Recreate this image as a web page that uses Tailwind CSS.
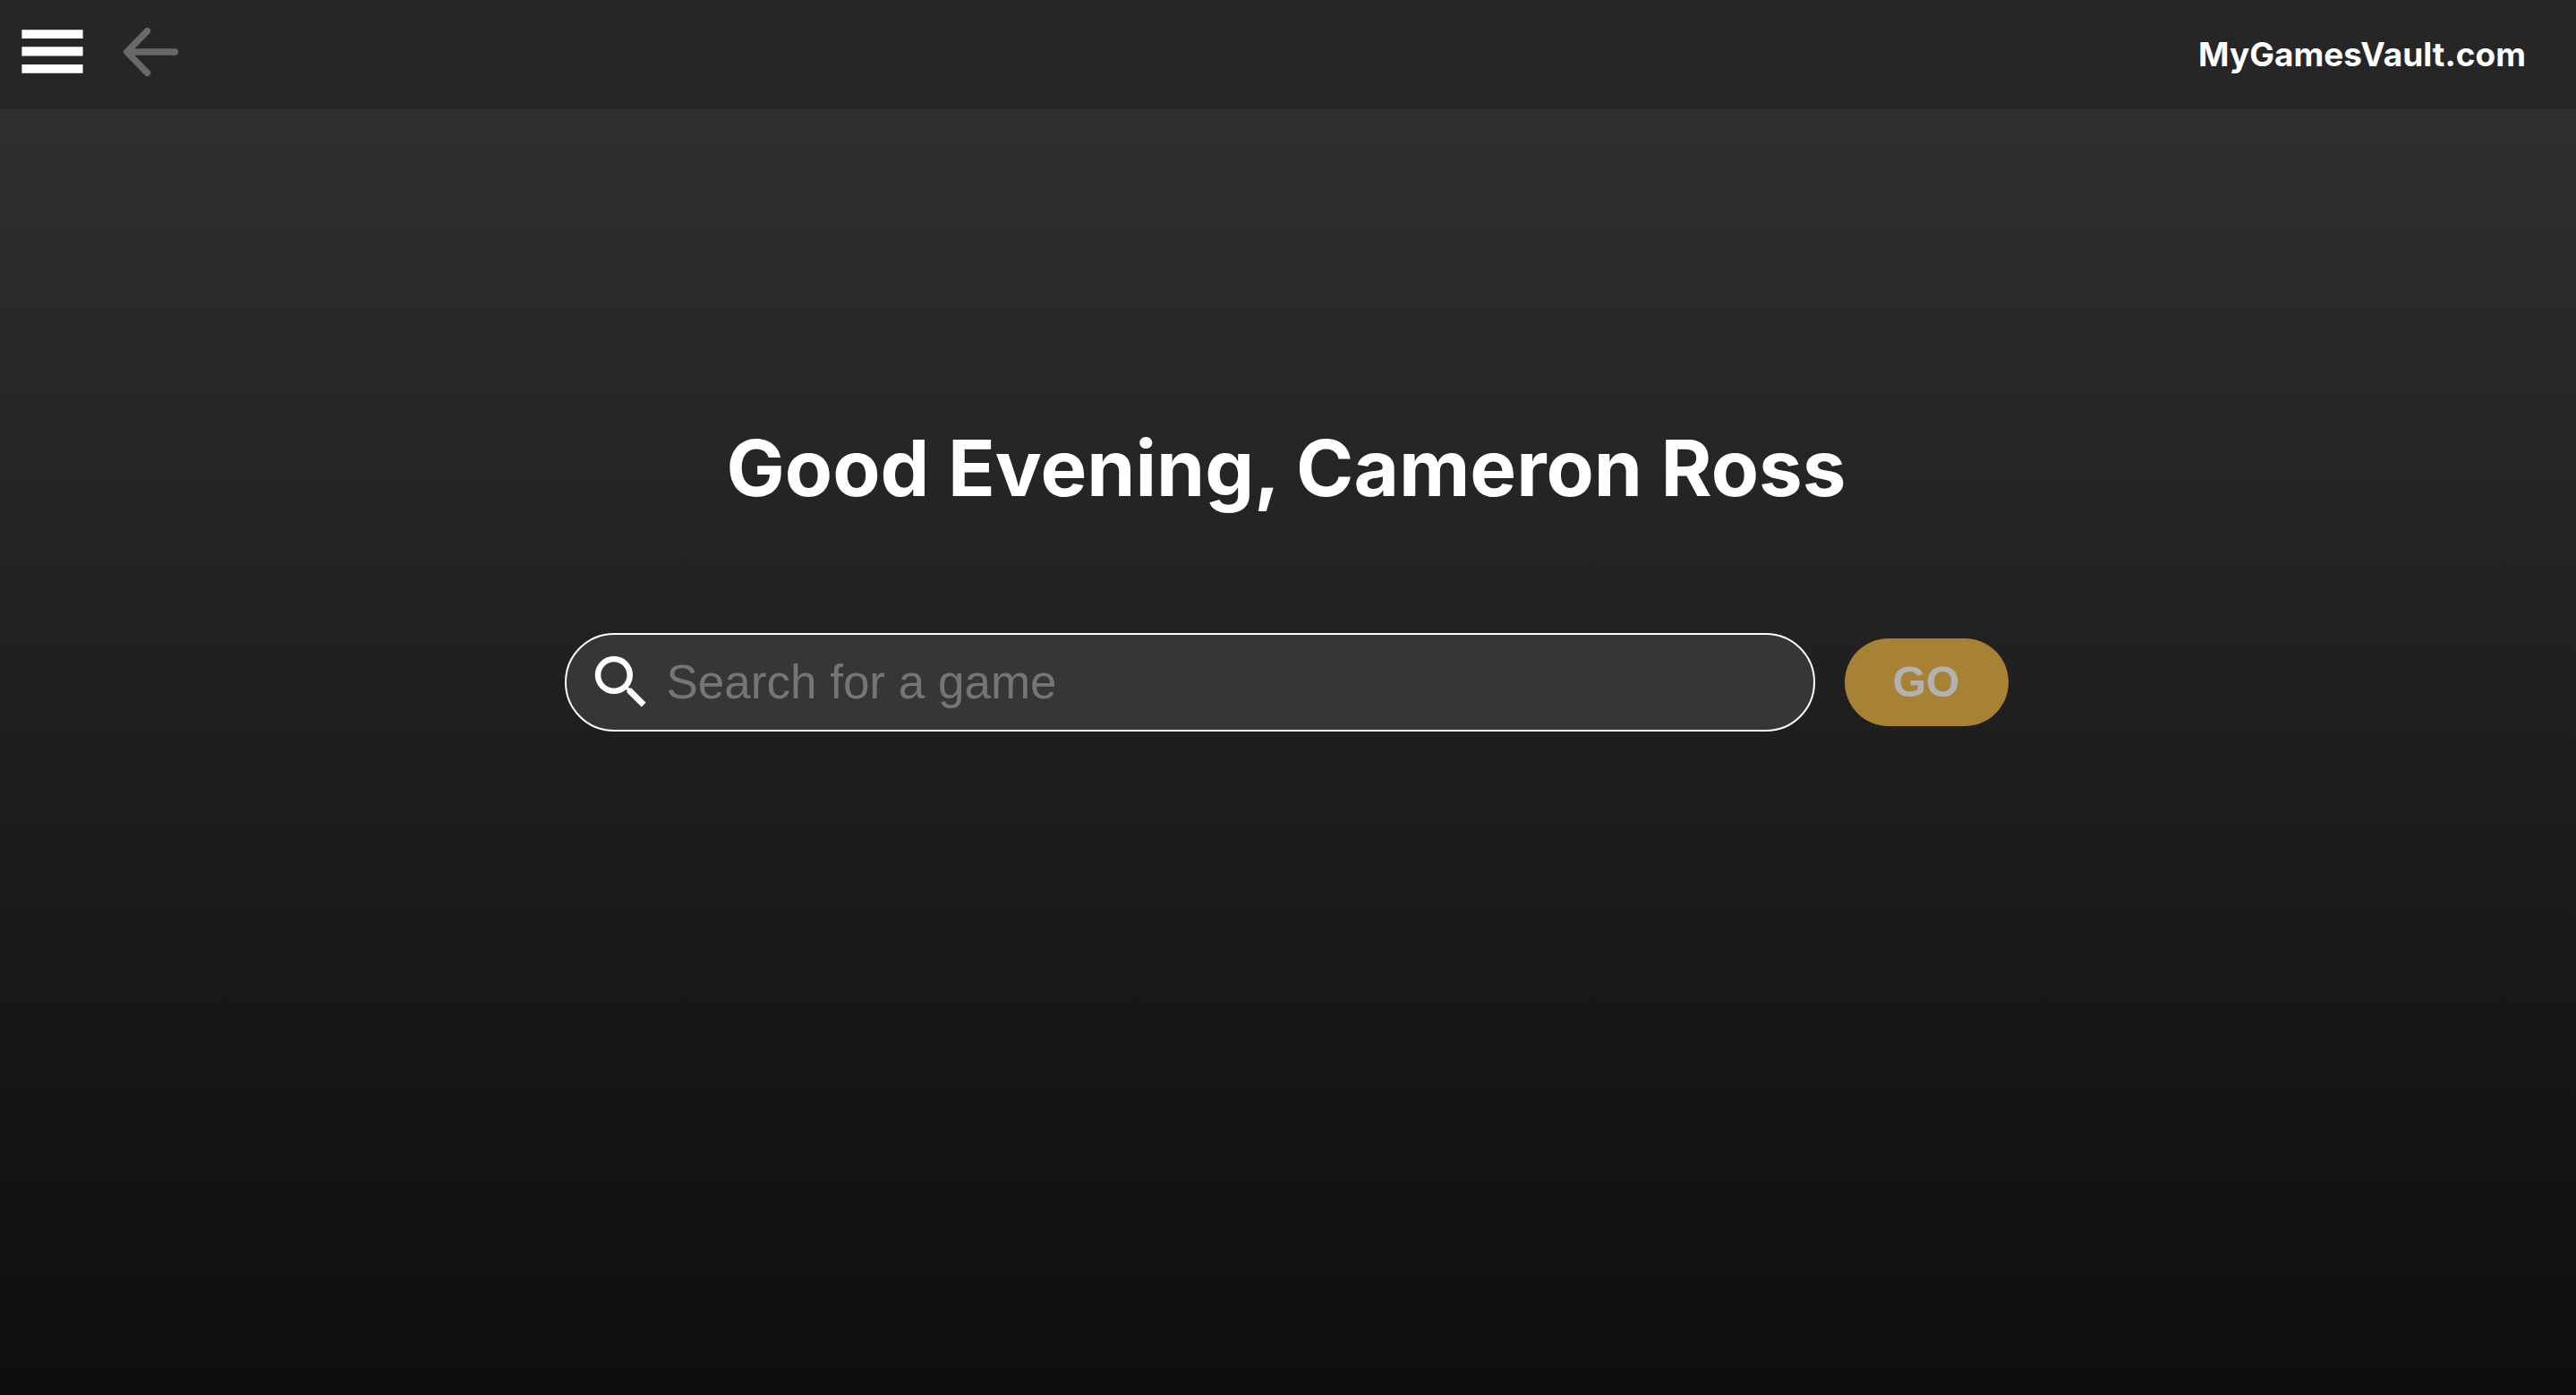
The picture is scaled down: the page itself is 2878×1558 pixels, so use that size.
<!DOCTYPE html>
<html lang="en">
<head>
<meta charset="utf-8">
<meta name="viewport" content="width=device-width, initial-scale=1">
<title>MyGamesVault.com</title>
<script src="https://cdn.jsdelivr.net/npm/@tailwindcss/browser@4"></script>
</head>
<body class="flex min-h-screen flex-col bg-linear-to-b from-[#323232] to-[#0e0e0e] font-['Inter',sans-serif] text-white">
  <header class="flex h-[122px] items-center justify-between bg-[#262626] pr-14 pl-6">
    <nav class="flex items-center gap-11 pb-1.5" aria-label="Main">
      <button type="button" aria-label="Menu">
        <svg class="block h-[50px] w-[69px]" viewBox="0 0 69 50" fill="currentColor" aria-hidden="true">
          <path d="M.4.2h68.2V10H.4zM.4 19.2h68.2v10.3H.4zM.4 39h68.2v9.7H.4z"/>
        </svg>
      </button>
      <button type="button" aria-label="Back" class="text-[#696969]">
        <svg class="block h-14 w-[64px]" viewBox="0 0 64 56" fill="none" stroke="currentColor" stroke-width="7.4" stroke-linecap="round" stroke-linejoin="round" aria-hidden="true">
          <path d="M58.5 28H5M27.5 4.700L4.700 28l22.800 23.300"/>
        </svg>
      </button>
    </nav>
    <a href="/" class="text-[37px] leading-12 font-bold">MyGamesVault.com</a>
  </header>
  <main class="flex flex-col items-center pt-[345px] pr-7 pl-6">
    <h1 class="text-[87px] leading-[112px] font-bold">Good Evening, Cameron Ross</h1>
    <form class="mt-32 flex w-full max-w-[1613px] items-center gap-[33px]">
      <label class="flex h-[110px] flex-1 items-center gap-3 rounded-full border-2 border-white bg-[#363636] pl-[22px]">
        <svg class="size-[78px] shrink-0" viewBox="0 0 24 24" fill="currentColor" aria-hidden="true">
          <path d="M15.500 14h-.79l-.28-.27A6.471 6.471 0 0 0 16 9.500 6.500 6.500 0 1 0 9.500 16c1.610 0 3.090-.59 4.230-1.570l.27.28v.79l5 4.990L20.490 19l-4.990-5zm-6 0C7.010 14 5 11.990 5 9.500S7.010 5 9.500 5 14 7.010 14 9.500 11.990 14 9.500 14z"/>
        </svg>
        <input type="text" aria-label="Search for a game" placeholder="Search for a game" class="w-full min-w-0 bg-transparent pr-12 font-['Liberation_Sans',sans-serif] text-[53px] leading-16 outline-none placeholder:text-[#757575]">
      </label>
      <button type="submit" disabled class="h-[98px] w-[183px] rounded-full bg-[#a78235] font-['Liberation_Sans',sans-serif] text-[48px] leading-14 font-bold text-[#b2b2b2]">GO</button>
    </form>
  </main>
</body>
</html>
